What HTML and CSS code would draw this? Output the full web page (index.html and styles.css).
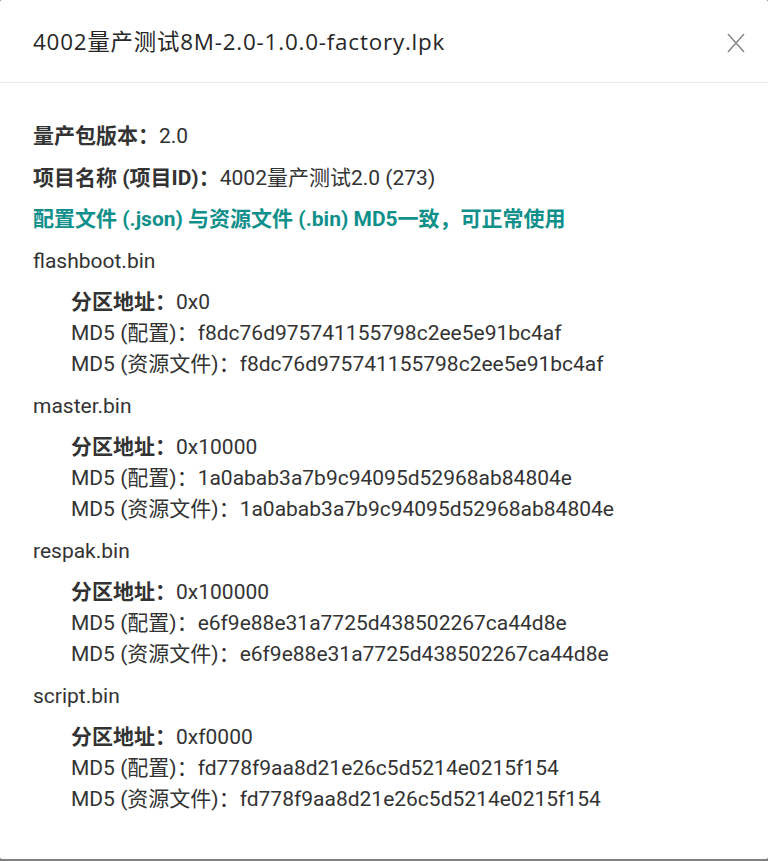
FILE: index.html
```html
<!DOCTYPE html>
<html lang="zh-CN">
<head>
<meta charset="utf-8">
<title>4002量产测试8M-2.0-1.0.0-factory.lpk</title>
<link rel="stylesheet" href="styles.css">
</head>
<body>
<div class="modal">
  <div class="modal-header">
    <div class="modal-title">4002量产测试8M-2.0-1.0.0-factory.lpk</div>
    <button class="modal-close" aria-label="关闭">
      <svg width="20" height="20" viewBox="0 0 20 20"><path d="M2 1 L18 19 M18 1 L2 19" stroke="#8a8a8a" stroke-width="1.6" fill="none"/></svg>
    </button>
  </div>
  <div class="modal-body">
    <div class="row"><span class="label">量产包版本：</span>2.0</div>
    <div class="row"><span class="label">项目名称 (项目ID)：</span>4002量产测试2.0 (273)</div>
    <div class="row ok">配置文件 (.json) 与资源文件 (.bin) MD5一致，可正常使用</div>

    <div class="row">flashboot.bin</div>
    <div class="group">
      <div class="line"><span class="label">分区地址：</span>0x0</div>
      <div class="line">MD5 (配置)：f8dc76d975741155798c2ee5e91bc4af</div>
      <div class="line">MD5 (资源文件)：f8dc76d975741155798c2ee5e91bc4af</div>
    </div>

    <div class="row">master.bin</div>
    <div class="group">
      <div class="line"><span class="label">分区地址：</span>0x10000</div>
      <div class="line">MD5 (配置)：1a0abab3a7b9c94095d52968ab84804e</div>
      <div class="line">MD5 (资源文件)：1a0abab3a7b9c94095d52968ab84804e</div>
    </div>

    <div class="row">respak.bin</div>
    <div class="group">
      <div class="line"><span class="label">分区地址：</span>0x100000</div>
      <div class="line">MD5 (配置)：e6f9e88e31a7725d438502267ca44d8e</div>
      <div class="line">MD5 (资源文件)：e6f9e88e31a7725d438502267ca44d8e</div>
    </div>

    <div class="row">script.bin</div>
    <div class="group">
      <div class="line"><span class="label">分区地址：</span>0xf0000</div>
      <div class="line">MD5 (配置)：fd778f9aa8d21e26c5d5214e0215f154</div>
      <div class="line">MD5 (资源文件)：fd778f9aa8d21e26c5d5214e0215f154</div>
    </div>
  </div>
</div>
</body>
</html>
```

FILE: styles.css
```css
html, body {
  margin: 0;
  padding: 0;
}
body {
  background: #808080;
  font-family: Roboto, "Noto Sans CJK SC", sans-serif;
  color: #333333;
}
.modal {
  background: #ffffff;
  height: 859px;
  border-radius: 2px;
  box-sizing: border-box;
}
.modal-header {
  height: 83px;
  box-sizing: border-box;
  border-bottom: 1px solid #e8e8e8;
  padding: 0 22px 0 33px;
  display: flex;
  align-items: center;
  justify-content: space-between;
}
.modal-title {
  font-family: "Open Sans", "Noto Sans CJK SC", sans-serif;
  font-size: 22.4px;
  line-height: 30px;
  letter-spacing: 0.8px;
  color: #262626;
  padding-top: 2px;
}
.modal-close {
  border: 0;
  background: none;
  padding: 0;
  width: 20px;
  height: 20px;
  display: flex;
  margin-top: 4px;
}
.modal-body {
  padding: 38px 33px 0 33px;
  font-size: 21px;
}
.row {
  line-height: 31px;
  margin-bottom: 10.5px;
}
.label {
  font-weight: 700;
}
.ok {
  color: #11908b;
  font-weight: 700;
}
.group {
  padding-left: 38px;
  margin-bottom: 10.5px;
}
.line {
  line-height: 31px;
}
```
